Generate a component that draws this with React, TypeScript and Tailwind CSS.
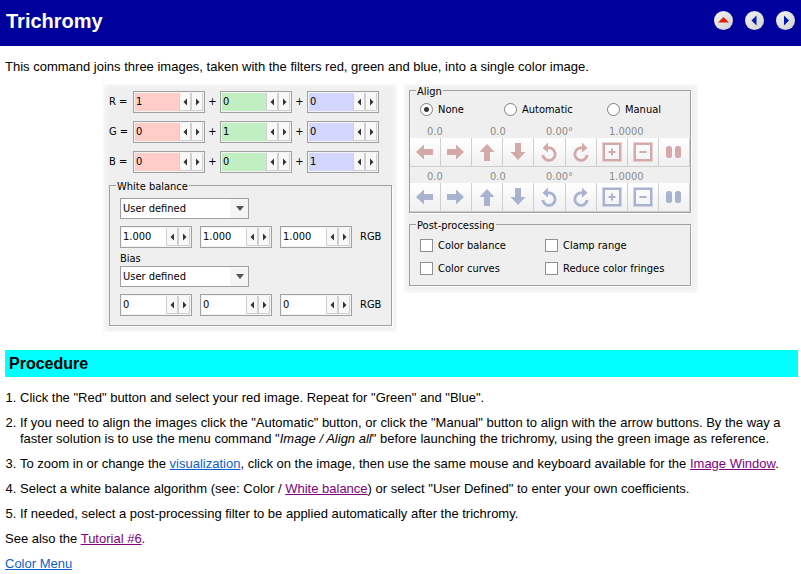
import React from 'react';

const ui = 'font-["DejaVu_Sans_Condensed","DejaVu_Sans",sans-serif]';

const channelRows = [
  { name: 'R', values: ['1', '0', '0'] },
  { name: 'G', values: ['0', '1', '0'] },
  { name: 'B', values: ['0', '0', '1'] },
];

const channelTints = ['bg-[#ffcdc8]', 'bg-[#c2efc2]', 'bg-[#d3d6ff]'];

const navLinks = [
  { label: 'Up', color: '#e02010', d: 'M4 11.5h11L9.5 6z' },
  { label: 'Previous', color: '#0018b0', d: 'M11.5 4.5v10L6.5 9.5z' },
  { label: 'Next', color: '#0018b0', d: 'M8 4.5v10l5-5z' },
];

const turnIcon = (
  <>
    <path d="M2.8 12A6.2 6.2 0 1 0 8 5" fill="none" stroke="currentColor" strokeWidth="2.8" />
    <path fill="currentColor" d="M2.500 5L8-0.500v10z" />
  </>
);

const frameIcon = (
  <>
    <rect x="-0.5" y="-0.5" width="19" height="19" fill="none" stroke="currentColor" strokeOpacity="0.5" />
    <rect x="1" y="1" width="16" height="16" fill="none" stroke="currentColor" strokeWidth="2" />
  </>
);

const tools: { label: string; icon: React.ReactNode }[] = [
  { label: 'Move left', icon: <path fill="currentColor" d="M0 9l8-7.500v4.500h9v6H8v4.500z" /> },
  { label: 'Move right', icon: <path fill="currentColor" d="M17 9L9 1.500v4.500H0v6h9v4.500z" /> },
  { label: 'Move up', icon: <path fill="currentColor" d="M9 1l7.500 8H12v9H6V9H1.500z" /> },
  { label: 'Move down', icon: <path fill="currentColor" d="M9 17l7.500-8H12V0H6v9H1.500z" /> },
  { label: 'Rotate left', icon: turnIcon },
  { label: 'Rotate right', icon: <g transform="matrix(-1 0 0 1 18 0)">{turnIcon}</g> },
  {
    label: 'Zoom in',
    icon: (
      <>
        {frameIcon}
        <path d="M9 5.5v7M5.500 9h7" stroke="currentColor" strokeWidth="2" />
      </>
    ),
  },
  {
    label: 'Zoom out',
    icon: (
      <>
        {frameIcon}
        <path d="M5.500 9h7" stroke="currentColor" strokeWidth="2" />
      </>
    ),
  },
  {
    label: 'Blink',
    icon: (
      <>
        <rect x="1" y="3" width="6" height="12" rx="2.5" fill="currentColor" />
        <rect x="10" y="3" width="6" height="12" rx="2.5" fill="currentColor" />
      </>
    ),
  },
];

const Spin: React.FC<{ label: string; value: string; tint?: string }> = ({ label, value, tint = 'bg-white' }) => (
  <span className="flex h-[22px] w-[72px] border border-[#a0a0a0] bg-[#f4f4f4] p-px">
    <input
      type="text"
      aria-label={label}
      defaultValue={value}
      className={`w-0 min-w-0 flex-1 pl-px outline-none ${tint}`}
    />
    {['M6 1.500v7L2.500 5z', 'M3 1.500v7L6.500 5z'].map((d, i) => (
      <button
        key={d}
        type="button"
        aria-label={i === 0 ? `Decrease ${label}` : `Increase ${label}`}
        className="flex w-3 items-center justify-center border border-t-0 border-[#d0d0d0] bg-[#f8f8f8]"
      >
        <svg viewBox="0 0 9 10" className="h-[10px] w-[9px] shrink-0" fill="#333">
          <path d={d} />
        </svg>
      </button>
    ))}
  </span>
);

const Dropdown: React.FC<{ label: string }> = ({ label }) => (
  <div className="relative h-[21px] w-[129px]">
    <select
      aria-label={label}
      className="block h-full w-full appearance-none border border-[#a0a0a0] bg-white bg-linear-to-l from-[#f5f5f5] from-[18px] to-white to-[18px] pl-[2px] outline-none"
    >
      <option>User defined</option>
    </select>
    <svg viewBox="0 0 8 5" className="pointer-events-none absolute top-[8px] right-[5px] h-[5px] w-[8px]" fill="#555">
      <path d="M0 0h8L4 5z" />
    </svg>
  </div>
);

const Group: React.FC<{ title: string; className?: string; children: React.ReactNode }> = ({
  title,
  className = '',
  children,
}) => (
  <fieldset className="border border-[#a0a0a0] shadow-[1px_1px_0_#fff]">
    <legend className="ml-[6px] h-[13px] px-px leading-[15px]">{title}</legend>
    <div className={className}>{children}</div>
  </fieldset>
);

const Toolbar: React.FC<{ name: string; color: string }> = ({ name, color }) => (
  <>
    <div className="grid h-4 grid-cols-[63px_56px_63px_1fr] leading-[20px] text-[#8c8c8c]">
      {['0.0', '0.0', '0.00°', '1.0000'].map((value, i) => (
        <span key={i} className="pl-[17px]">
          {value}
        </span>
      ))}
    </div>
    <div className="grid grid-cols-9">
      {tools.map((tool) => (
        <button
          key={tool.label}
          type="button"
          disabled
          aria-label={`${tool.label} ${name}`}
          className={`flex h-[29px] items-center justify-center border-r border-b border-[#cfcfcf] bg-linear-to-b from-white to-[#f0f0f0] ${color}`}
        >
          <svg viewBox="0 0 18 18" className="h-[18px] w-[18px] overflow-visible">
            {tool.icon}
          </svg>
        </button>
      ))}
    </div>
  </>
);

const panel = `w-[294px] bg-[#efefef] text-[11px] leading-[14px] shadow-[inset_0_0_4px_2px_#fafafa] ${ui}`;

const App: React.FC = () => {
  return (
    <div className='min-h-screen bg-white font-["Liberation_Sans",Arial,sans-serif] text-[13px] leading-4 text-black'>
      <header className="flex h-[46px] items-start justify-between bg-[#00009c] pt-[9px] pr-[6px] pl-[6px]">
        <h1 className="text-[20px] leading-6 font-bold text-white">Trichromy</h1>
        <nav className="flex gap-3 pt-[2px]">
          {navLinks.map((link) => (
            <a
              key={link.label}
              href="#"
              aria-label={link.label}
              className="h-[19px] w-[19px] rounded-full bg-linear-to-br from-[#f4f4f4] to-[#d0d0d0]"
            >
              <svg viewBox="0 0 19 19" className="h-full w-full">
                <path d={link.d} fill={link.color} />
              </svg>
            </a>
          ))}
        </nav>
      </header>

      <main className="pr-[3px] pl-[5px]">
        <p className="pt-[13px]">
          This command joins three images, taken with the filters red, green and blue, into a single color image.
        </p>

        <div className="mt-[9px] flex items-start justify-center gap-[7px] pr-[2px]">
          <section className={`px-[6px] pt-[7px] pb-[6px] ${panel}`}>
            <div className="flex flex-col gap-2">
              {channelRows.map((row) => (
                <div key={row.name} className="flex items-center">
                  <span className="w-6">{row.name} =</span>
                  {row.values.map((value, i) => (
                    <React.Fragment key={i}>
                      {i > 0 && <span className="w-[15px] text-center">+</span>}
                      <Spin label={`${row.name} coefficient ${i + 1}`} value={value} tint={channelTints[i]} />
                    </React.Fragment>
                  ))}
                </div>
              ))}
            </div>

            <div className="mt-[6px]">
              <Group title="White balance" className="px-[10px] pt-[6px] pb-[9px]">
                <Dropdown label="White balance" />
                <div className="mt-[7px] flex items-center gap-2">
                  <Spin label="Red balance" value="1.000" />
                  <Spin label="Green balance" value="1.000" />
                  <Spin label="Blue balance" value="1.000" />
                  <span>RGB</span>
                </div>
                <div className="pt-1">Bias</div>
                <Dropdown label="Bias" />
                <div className="mt-[7px] flex items-center gap-2">
                  <Spin label="Red bias" value="0" />
                  <Spin label="Green bias" value="0" />
                  <Spin label="Blue bias" value="0" />
                  <span>RGB</span>
                </div>
              </Group>
            </div>
          </section>

          <section className={`pr-[7px] pb-[7px] pl-[5px] ${panel}`}>
            <Group title="Align">
              <div className="grid h-[25px] grid-cols-[84px_103px_1fr] items-center">
                {['None', 'Automatic', 'Manual'].map((mode, i) => (
                  <label key={mode} className="flex items-center gap-[5px] pl-[10px]">
                    <input
                      type="radio"
                      name="align"
                      defaultChecked={i === 0}
                      className="h-[13px] w-[13px] appearance-none rounded-full border border-[#808080] bg-white checked:bg-[radial-gradient(circle,#333_2px,#fff_3px)]"
                    />
                    {mode}
                  </label>
                ))}
              </div>
              <Toolbar name="red" color="text-[#d3a9a9]" />
              <Toolbar name="blue" color="text-[#a9b3cf]" />
            </Group>

            <div className="mt-[5px]">
              <Group title="Post-processing" className="px-[10px] pt-[8px] pb-[10px]">
                <div className="grid grid-cols-[125px_1fr] gap-y-[10px]">
                  {['Color balance', 'Clamp range', 'Color curves', 'Reduce color fringes'].map((option) => (
                    <label key={option} className="flex h-[13px] items-center gap-[5px] whitespace-nowrap">
                      <input
                        type="checkbox"
                        className="h-[13px] w-[13px] appearance-none border border-[#909090] bg-white checked:bg-[#606060]"
                      />
                      {option}
                    </label>
                  ))}
                </div>
              </Group>
            </div>
          </section>
        </div>

        <h2 className="mt-[18px] bg-[#00ffff] pl-1 text-[16px] leading-[27px] font-bold">Procedure</h2>

        <ol className="mt-[13px] flex list-decimal flex-col gap-[9px] pl-[15px]">
          <li>Click the "Red" button and select your red image. Repeat for "Green" and "Blue".</li>
          <li>
            If you need to align the images click the "Automatic" button, or click the "Manual" button to align with the
            arrow buttons. By the way a faster solution is to use the menu command "<i>Image / Align all</i>" before
            launching the trichromy, using the green image as reference.
          </li>
          <li>
            To zoom in or change the{' '}
            <a href="#" className="text-[#0c5fce] underline">
              visualization
            </a>
            , click on the image, then use the same mouse and keyboard available for the{' '}
            <a href="#" className="text-[#800080] underline">
              Image Window
            </a>
            .
          </li>
          <li>
            Select a white balance algorithm (see: Color /{' '}
            <a href="#" className="text-[#800080] underline">
              White balance
            </a>
            ) or select "User Defined" to enter your own coefficients.
          </li>
          <li>If needed, select a post-processing filter to be applied automatically after the trichromy.</li>
        </ol>
        <p className="mt-[9px]">
          See also the{' '}
          <a href="#" className="text-[#800080] underline">
            Tutorial #6
          </a>
          .
        </p>
        <p className="mt-[9px]">
          <a href="#" className="text-[#0c5fce] underline">
            Color Menu
          </a>
        </p>
      </main>
    </div>
  );
};

export default App;
